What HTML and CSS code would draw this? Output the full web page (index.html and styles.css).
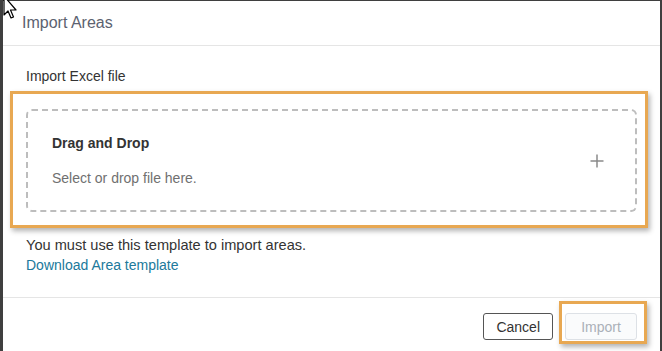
FILE: index.html
```html
<!DOCTYPE html>
<html lang="en">
<head>
    <meta charset="UTF-8">
    <meta name="viewport" content="width=device-width, initial-scale=1.0">
    <title>Import Areas</title>
    <link rel="stylesheet" href="styles.css">
</head>
<body>
    <div class="modal">
        <div class="modal-header">Import Areas</div>

        <div class="modal-body">
            <label class="field-label">Import Excel file</label>
            <div class="highlight highlight-drop">
                <div class="dropzone">
                    <div class="dropzone-text">
                        <div class="dropzone-title">Drag and Drop</div>
                        <div class="dropzone-hint">Select or drop file here.</div>
                    </div>
                    <svg class="plus" width="14" height="14" viewBox="0 0 14 14">
                        <path d="M7 0.5V13.5M0.5 7H13.5" stroke="#8a8a8a" stroke-width="1.5" fill="none"/>
                    </svg>
                </div>
            </div>
            <p class="note">You must use this template to import areas.</p>
            <a class="link" href="#">Download Area template</a>
        </div>

        <div class="modal-footer">
            <button class="btn">Cancel</button>
            <div class="highlight highlight-btn">
                <button class="btn btn-disabled" disabled>Import</button>
            </div>
        </div>
    </div>

    <svg class="cursor" width="14" height="20" viewBox="0 0 14 20">
        <path d="M1 -4V15L5 11L8 18L10.5 17L7.5 10H13Z" fill="#fff" stroke="#000" stroke-width="1.2" stroke-linejoin="round"/>
    </svg>
</body>
</html>
```

FILE: styles.css
```css
/* Basic reset */
* {
    box-sizing: border-box;
    margin: 0;
    padding: 0;
    font-family: "Liberation Sans", Arial, sans-serif;
}

body {
    background-color: #3f3f3f;
    width: 662px;
    height: 351px;
    overflow: hidden;
    position: relative;
    color: #333;
}

.modal {
    margin: 1px 0 0 3px;
    width: 657px;
    height: 350px;
    background-color: #fff;
}

.modal-header {
    height: 45px;
    padding: 0 19px;
    line-height: 43px;
    font-size: 16px;
    color: #5c6270;
    border-bottom: 1px solid #e5e5e5;
}

.modal-body {
    padding: 22px 23px 0 23px;
    height: 252px;
    border-bottom: 1px solid #e5e5e5;
}

.field-label {
    display: block;
    font-size: 14px;
    line-height: 16px;
    margin-bottom: 7px;
}

.highlight {
    border: 3px solid #e8a852;
    box-shadow: 2px 3px 5px rgba(0, 0, 0, 0.3);
}

.highlight-drop {
    margin: 0 -11px 0 -16px;
    padding: 15px 8px 13px 13px;
}

.dropzone {
    display: flex;
    align-items: center;
    justify-content: space-between;
    height: 103px;
    padding: 0 31px 0 24px;
    border: 2px dashed #bdbdbd;
    border-radius: 6px;
}

.dropzone-title {
    font-size: 14px;
    font-weight: bold;
    line-height: 16px;
    color: #333;
}

.dropzone-hint {
    margin-top: 19px;
    font-size: 14px;
    line-height: 16px;
    color: #707070;
}

.dropzone-text {
    margin-top: -1px;
}

.note {
    margin-top: 9px;
    font-size: 14.6px;
    line-height: 17px;
}

.link {
    display: block;
    margin-top: 3px;
    font-size: 14px;
    line-height: 17px;
    color: #20799b;
    text-decoration: none;
}

.modal-footer {
    display: flex;
    justify-content: flex-end;
    align-items: flex-start;
    padding: 15px 23px 0 0;
}

.btn {
    height: 27px;
    padding: 0 12px;
    font-size: 14px;
    color: #333;
    background-color: #fff;
    border: 1px solid #555;
    border-radius: 3px;
}

.highlight-btn {
    margin: -12px -10px 0 6px;
    padding: 9px 7px 1px 3px;
}

.btn-disabled {
    width: 72px;
    color: #aab0b8;
    border-color: #dde1e6;
    background-color: #fafbfc;
}

.cursor {
    position: absolute;
    left: 3px;
    top: 0;
}
```
